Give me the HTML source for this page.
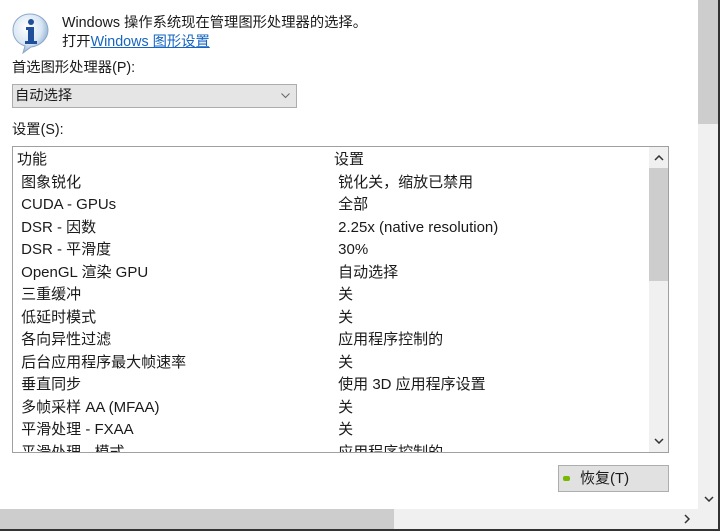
<!DOCTYPE html>
<html><head><meta charset="utf-8"><style>
body{margin:0;width:720px;height:531px;position:relative;overflow:hidden;background:#fff;font-family:"Liberation Sans","Noto Sans CJK SC",sans-serif;font-size:14.3px;color:#1a1a1a}
.a{position:absolute;white-space:nowrap;line-height:18px}
</style></head><body>
<svg class="a" style="left:11px;top:12px" width="40" height="42" viewBox="0 0 40 42">
<defs><radialGradient id="g" cx="0.4" cy="0.35" r="0.7"><stop offset="0" stop-color="#fff"/><stop offset="0.6" stop-color="#d8e6f4"/><stop offset="1" stop-color="#7fa2c8"/></radialGradient></defs>
<path d="M19 2C9 2 2 9 2 18c0 8 5 14 12 16l-2 7 8-6c9-1 17-8 17-17C37 9 29 2 19 2z" fill="url(#g)" stroke="#8aa8c8"/>
<circle cx="20" cy="10" r="3" fill="#1f4e9a"/>
<path d="M15 15h8v14h3v3H14v-3h3V18h-2z" fill="#1f4e9a"/>
</svg>
<div class="a" style="left:62px;top:14px">Windows 操作系统现在管理图形处理器的选择。</div>
<div class="a" style="left:62px;top:33px">打开<span style="color:#1565c0;text-decoration:underline">Windows 图形设置</span></div>
<div class="a" style="left:12px;top:59px">首选图形处理器(P):</div>
<div class="a" style="left:12px;top:84px;width:283px;height:22px;background:#e5e5e5;border:1px solid #adadad"><span style="position:absolute;left:2px;top:2px">自动选择</span><svg style="position:absolute;right:6px;top:8px" width="9" height="6"><path d="M0.5 0.5L4.5 4.5L8.5 0.5" fill="none" stroke="#666"/></svg></div>
<div class="a" style="left:12px;top:121px">设置(S):</div>
<div class="a" style="left:12px;top:146px;width:655px;height:305px;border:1px solid #a0a0a0;overflow:hidden;line-height:22.5px;font-size:15px">
<div style="position:absolute;left:636px;top:0;width:19px;height:305px;background:#f0f0f0"></div>
<div style="position:absolute;left:636px;top:21px;width:19px;height:113px;background:#cdcdcd"></div>
<svg style="position:absolute;left:641px;top:8px" width="10" height="6"><path d="M1 5L5 1L9 5" fill="none" stroke="#333" stroke-width="1.5"/></svg>
<svg style="position:absolute;left:641px;top:291px" width="10" height="6"><path d="M1 1L5 5L9 1" fill="none" stroke="#333" stroke-width="1.5"/></svg>
<div style="position:absolute;left:4px;top:2px">功能<br>&nbsp;图象锐化<br>&nbsp;CUDA - GPUs<br>&nbsp;DSR - 因数<br>&nbsp;DSR - 平滑度<br>&nbsp;OpenGL 渲染 GPU<br>&nbsp;三重缓冲<br>&nbsp;低延时模式<br>&nbsp;各向异性过滤<br>&nbsp;后台应用程序最大帧速率<br>&nbsp;垂直同步<br>&nbsp;多帧采样 AA (MFAA)<br>&nbsp;平滑处理 - FXAA<br>&nbsp;平滑处理 - 模式</div>
<div style="position:absolute;left:321px;top:2px">设置<br>&nbsp;锐化关，缩放已禁用<br>&nbsp;全部<br>&nbsp;2.25x (native resolution)<br>&nbsp;30%<br>&nbsp;自动选择<br>&nbsp;关<br>&nbsp;关<br>&nbsp;应用程序控制的<br>&nbsp;关<br>&nbsp;使用 3D 应用程序设置<br>&nbsp;关<br>&nbsp;关<br>&nbsp;应用程序控制的</div>
</div>
<div class="a" style="left:558px;top:465px;width:109px;height:25px;background:#e1e1e1;border:1px solid #adadad"><div style="position:absolute;left:4px;top:10px;width:7px;height:5px;background:#76b900;border-radius:2px"></div><span style="position:absolute;left:21px;top:4px;font-size:15px">恢复(T)</span></div>
<div class="a" style="left:698px;top:0;width:20px;height:509px;background:#f0f0f0"></div>
<div class="a" style="left:698px;top:0;width:20px;height:124px;background:#cdcdcd"></div>
<svg class="a" style="left:704px;top:496px" width="10" height="6"><path d="M1 1L5 5L9 1" fill="none" stroke="#333" stroke-width="1.5"/></svg>
<div class="a" style="left:718px;top:0;width:2px;height:531px;background:#333"></div>
<div class="a" style="left:0;top:509px;width:718px;height:20px;background:#f0f0f0"></div>
<div class="a" style="left:0;top:509px;width:394px;height:20px;background:#cdcdcd"></div>
<svg class="a" style="left:684px;top:514px" width="6" height="10"><path d="M1 1L5 5L1 9" fill="none" stroke="#333" stroke-width="1.5"/></svg>
<div class="a" style="left:0;top:529px;width:720px;height:2px;background:#333"></div>
</body></html>
